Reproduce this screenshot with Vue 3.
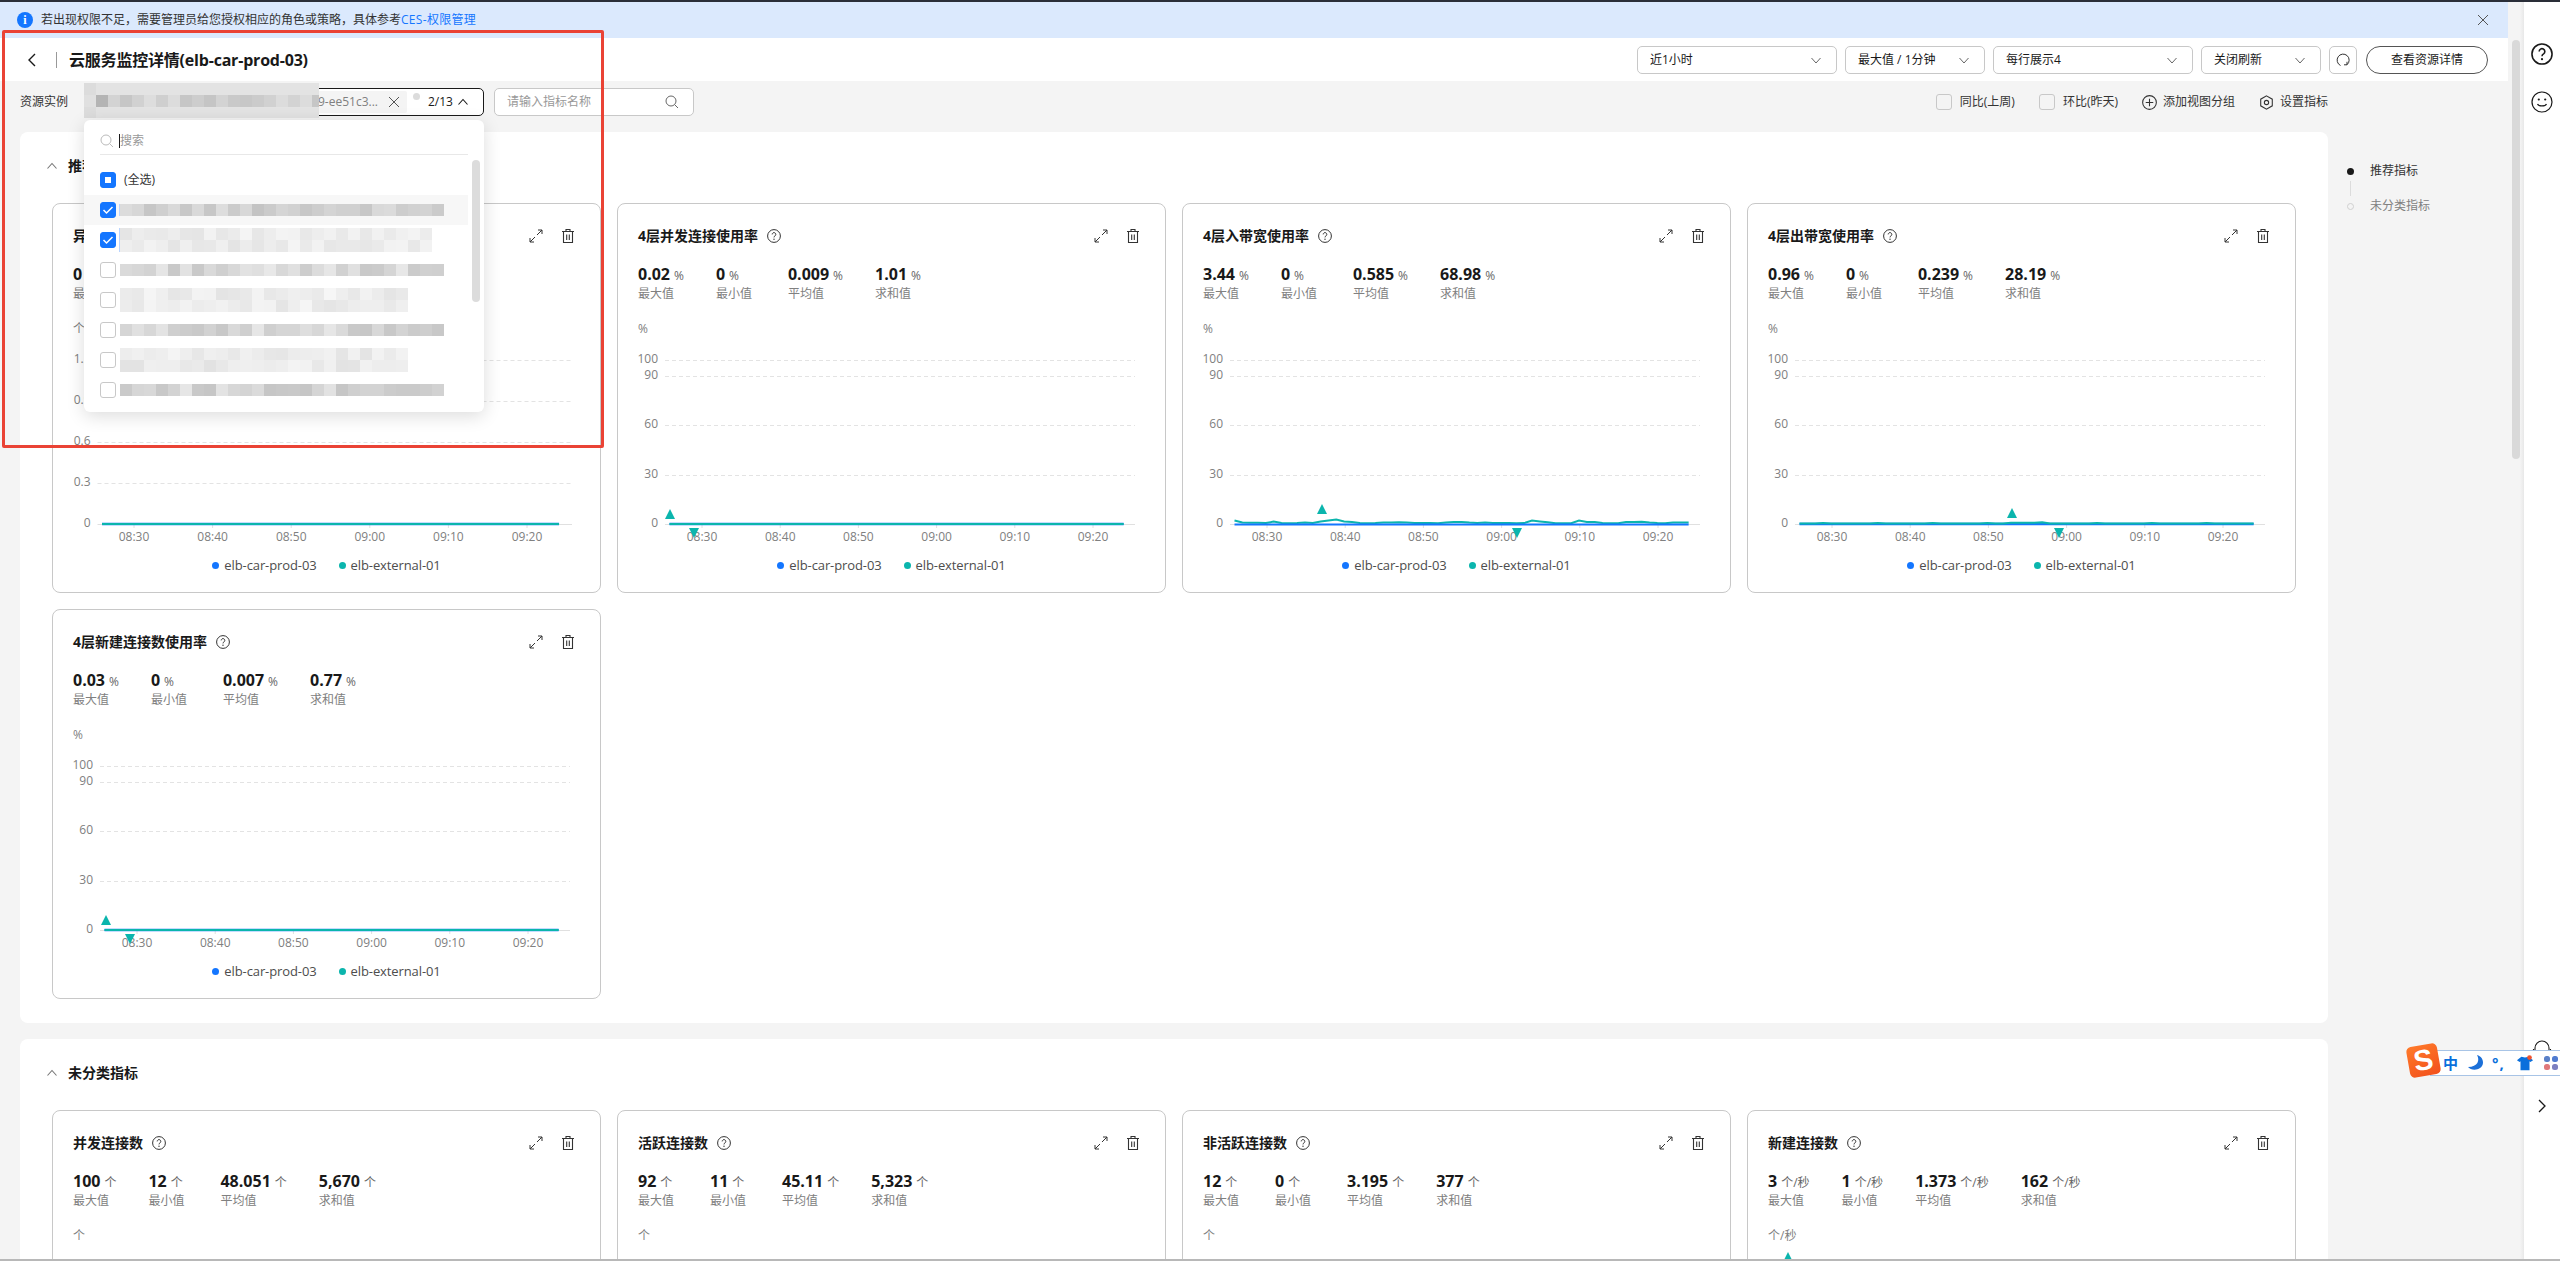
<script setup>
const pctTicks = [
  { label: '100', y: 39 }, { label: '90', y: 55 }, { label: '60', y: 104 }, { label: '30', y: 154 }, { label: '0', y: 203 }
]
const cntTicks = [
  { label: '1.2', y: 39 }, { label: '0.9', y: 80 }, { label: '0.6', y: 121 }, { label: '0.3', y: 162 }, { label: '0', y: 203 }
]
const times = ['08:30', '08:40', '08:50', '09:00', '09:10', '09:20']
const zero = new Array(59).fill(0)
const wobble3 = [3.5,1.5,1.2,1.2,1,2.4,1,.7,.9,1.6,.9,2.4,3.5,4.5,2.6,2,1,.8,1,1.6,1.4,1.7,1.4,1,.9,.9,.8,1.6,1.9,2,1.4,1,1.4,1,.9,.9,.8,.9,3.5,2.6,1.8,.8,.7,.8,3.5,2,2,1,.8,.7,2,1.9,2.2,1.4,1,.8,1.4,1.6,1.4]
const wobble4 = zero.map((_, i) => (i % 7 === 3 ? 1 : 0.5) + (i > 26 && i < 32 ? 0.7 : 0))

const stat = (a, b, c, d, unit) => ['最大值', '最小值', '平均值', '求和值'].map((label, i) => ({ label, unit, value: [a, b, c, d][i] }))

const firstCards = [
  { title: '异常主机数', unit: '个', stats: stat('0', '0', '0', '0', '个'), ticks: cntTicks, x0: 49, tick0: 81, tickStep: 78.6, gridL: 44.5, gridR: 519, teal: zero, blue: zero },
  { title: '4层并发连接使用率', unit: '%', stats: stat('0.02', '0', '0.009', '1.01', '%'), ticks: pctTicks, up: [52, 193], down: 76, teal: zero, blue: zero },
  { title: '4层入带宽使用率', unit: '%', stats: stat('3.44', '0', '0.585', '68.98', '%'), ticks: pctTicks, up: [139, 188], down: 334, teal: wobble3, blue: zero, blueTop: true },
  { title: '4层出带宽使用率', unit: '%', stats: stat('0.96', '0', '0.239', '28.19', '%'), ticks: pctTicks, up: [264, 192], down: 311, teal: wobble4, blue: zero },
  { title: '4层新建连接数使用率', unit: '%', stats: stat('0.03', '0', '0.007', '0.77', '%'), ticks: pctTicks, up: [53, 193], down: 77, teal: zero, blue: zero }
]
// The second group runs past the bottom of the window, so only the top of each chart is drawn.
const secondCards = [
  { title: '并发连接数', unit: '个', stats: stat('100', '12', '48.051', '5,670', '个'), cut: true },
  { title: '活跃连接数', unit: '个', stats: stat('92', '11', '45.11', '5,323', '个'), cut: true },
  { title: '非活跃连接数', unit: '个', stats: stat('12', '0', '3.195', '377', '个'), cut: true },
  { title: '新建连接数', unit: '个/秒', stats: stat('3', '1', '1.373', '162', '个/秒'), up: [40, 29], cut: true }
]
const sections = [
  { name: '推荐指标', cards: firstCards },
  { name: '未分类指标', cards: secondCards }
]

const pts = (c, s) => s.map((v, i) => `${(c.x0 ?? 51.5) + ((c.x0 ? 7.88 : 7.83) * i)},${203 - v}`).join(' ')
const tickX = (c, i) => (c.tick0 ?? 84) + (c.tickStep ?? 78.2) * i

const hash = (a, b) => {
  const x = Math.sin(a * 12.9898 + b * 78.233) * 43758.5453
  return x - Math.floor(x)
}
const gray = (seed, i, lo, hi) => {
  const v = Math.round(lo + (hi - lo) * hash(seed, i))
  return `rgb(${v},${v},${v})`
}
const mosaic = (seed, cols, rows, lo, hi) => Array.from({ length: cols * rows }, (_, i) => gray(seed, i, lo, hi))

const topMask = [
  ...Array.from({ length: 20 }, (_, i) => (i === 0 ? '#dcdcdc' : '#e3e3e3')),
  ...Array.from({ length: 20 }, (_, i) => (i === 0 ? '#e0e0e0' : i === 1 ? '#b4b4b4' : gray(9, i, 196, 222))),
  ...Array.from({ length: 20 }, (_, i) => (i === 0 ? '#dcdcdc' : '#e3e3e3'))
]

const options = [
  { checked: true, hover: true, rows: 1, cols: 27, lo: 196, hi: 222, seed: 1 },
  { checked: true, rows: 2, cols: 26, lo: 228, hi: 244, seed: 2 },
  { rows: 1, cols: 27, lo: 200, hi: 232, seed: 3 },
  { rows: 2, cols: 24, lo: 228, hi: 246, seed: 4 },
  { rows: 1, cols: 27, lo: 198, hi: 230, seed: 5 },
  { rows: 2, cols: 24, lo: 226, hi: 244, seed: 6 },
  { rows: 1, cols: 27, lo: 196, hi: 232, seed: 7 }
]
const selects = [
  { text: '近1小时', w: 200 }, { text: '最大值 / 1分钟', w: 140 }, { text: '每行展示4', w: 200 }, { text: '关闭刷新', w: 120 }
]
</script>

<template>
  <div class="page">
    <svg class="sprite" aria-hidden="true">
      <symbol id="i-expand" viewBox="0 0 14 14">
        <path d="M8 6l5-5M9 1h4v4M6 8l-5 5M1 9v4h4" fill="none" stroke="currentColor" stroke-width="1" />
      </symbol>
      <symbol id="i-trash" viewBox="0 0 14 16">
        <path d="M1 3.5h12M5 3.500V1.500h4v2M2.500 3.500v11h9v-11M5.700 6.500v5.500M8.300 6.500v5.500" fill="none" stroke="currentColor" stroke-width="1.100" />
      </symbol>
      <symbol id="i-help" viewBox="0 0 14 14">
        <circle cx="7" cy="7" r="6.400" fill="none" stroke="currentColor" stroke-width="1" />
        <path d="M5.200 5.400a1.800 1.800 0 1 1 2.800 1.500c-.7.4-1 .8-1 1.500" fill="none" stroke="currentColor" stroke-width="1" />
        <circle cx="7" cy="10.300" r=".7" fill="currentColor" />
      </symbol>
      <symbol id="i-down" viewBox="0 0 12 12">
        <path d="M1.500 4l4.500 5 4.500-5" fill="none" stroke="currentColor" stroke-width="1" />
      </symbol>
      <symbol id="i-up" viewBox="0 0 12 12">
        <path d="M1.500 8.500l4.500-5 4.500 5" fill="none" stroke="currentColor" stroke-width="1.100" />
      </symbol>
      <symbol id="i-search" viewBox="0 0 14 14">
        <circle cx="6" cy="6" r="5" fill="none" stroke="currentColor" stroke-width="1" />
        <path d="M9.700 9.700l3.300 3.300" fill="none" stroke="currentColor" stroke-width="1" />
      </symbol>
      <symbol id="i-close" viewBox="0 0 12 12">
        <path d="M1 1l10 10M11 1L1 11" fill="none" stroke="currentColor" stroke-width="1" />
      </symbol>
    </svg>

    <div class="top-strip"></div>
    <div class="frame">
      <div class="content">
        <div class="banner">
          <span class="info-dot">i</span>
          <span class="banner-text">若出现权限不足，需要管理员给您授权相应的角色或策略，具体参考<a class="banner-link">CES-权限管理</a></span>
          <svg class="banner-close"><use href="#i-close" /></svg>
        </div>

        <div class="header">
          <svg class="back" viewBox="0 0 10 16"><path d="M8 2L2 8l6 6" fill="none" stroke="currentColor" stroke-width="1.400" /></svg>
          <span class="divider"></span>
          <h1 class="page-title">云服务监控详情(elb-car-prod-03)</h1>
          <div class="controls">
            <div v-for="s in selects" :key="s.text" class="select" :style="{ width: s.w + 'px' }">
              <span>{{ s.text }}</span>
              <svg class="chev"><use href="#i-down" /></svg>
            </div>
            <div class="refresh">
              <svg viewBox="0 0 16 16" class="refresh-icon"><path d="M5.500 13.500A6 6 0 1 1 12 12.700M12 9.800v3h-3" fill="none" stroke="currentColor" stroke-width="1" /></svg>
            </div>
            <div class="detail-btn">查看资源详情</div>
          </div>
        </div>

        <div class="toolbar">
          <span class="tool-label">资源实例</span>
          <div class="multi">
            <div class="tag"><span class="tag-text">b9-ee51c3...</span><svg class="tag-x"><use href="#i-close" /></svg></div>
            <span class="multi-dot"></span>
            <span class="count">2/13</span>
            <svg class="multi-chev"><use href="#i-up" /></svg>
          </div>
          <div class="metric-search">
            <span>请输入指标名称</span>
            <svg class="search-ico"><use href="#i-search" /></svg>
          </div>
          <div class="tool-right">
            <label class="tool-item"><span class="box"></span>同比(上周)</label>
            <label class="tool-item"><span class="box"></span>环比(昨天)</label>
            <span class="tool-item">
              <svg viewBox="0 0 14 14" class="tool-ico"><circle cx="7" cy="7" r="6.400" fill="none" stroke="currentColor" /><path d="M7 3.500v7M3.500 7h7" stroke="currentColor" /></svg>添加视图分组
            </span>
            <span class="tool-item">
              <svg viewBox="0 0 14 14" class="tool-ico"><path d="M7 .8l5.400 3.100v6.200L7 13.200l-5.400-3.100V3.900z" fill="none" stroke="currentColor" /><circle cx="7" cy="7" r="2" fill="none" stroke="currentColor" /></svg>设置指标
            </span>
          </div>
        </div>

        <div class="body">
          <div class="sections">
            <section v-for="sec in sections" :key="sec.name" class="section">
              <div class="sec-head">
                <svg class="sec-chev"><use href="#i-up" /></svg>
                <h2>{{ sec.name }}</h2>
              </div>
              <div class="grid">
                <article v-for="c in sec.cards" :key="c.title" class="card">
                  <div class="card-head">
                    <span class="card-title">{{ c.title }}</span>
                    <svg class="help"><use href="#i-help" /></svg>
                    <svg class="act first"><use href="#i-expand" /></svg>
                    <svg class="act trash"><use href="#i-trash" /></svg>
                  </div>
                  <div class="stats">
                    <div v-for="s in c.stats" :key="s.label" class="stat">
                      <div class="stat-val"><b>{{ s.value }}</b><span>{{ s.unit }}</span></div>
                      <div class="stat-label">{{ s.label }}</div>
                    </div>
                  </div>
                  <svg class="chart" viewBox="0 0 547 231" width="547" height="231">
                    <text x="20" y="12" class="ax">{{ c.unit }}</text>
                    <template v-if="!c.cut">
                      <template v-for="t in c.ticks" :key="t.label">
                        <text :x="(c.gridL ?? 47) - 7" :y="t.y + 3" text-anchor="end" class="ax">{{ t.label }}</text>
                        <line v-if="t.label !== '0'" :x1="c.gridL ?? 47" :x2="c.gridR ?? 517" :y1="t.y + .5" :y2="t.y + .5" class="dash" />
                      </template>
                      <line :x1="c.gridL ?? 47" :x2="c.gridR ?? 517" y1="203.500" y2="203.500" class="axis" />
                      <template v-for="(t, i) in times" :key="t">
                        <line :x1="tickX(c, i)" :x2="tickX(c, i)" y1="203" y2="207" class="axis" />
                        <text :x="tickX(c, i)" y="220" text-anchor="middle" class="ax">{{ t }}</text>
                      </template>
                      <polyline v-if="!c.blueTop" :points="pts(c, c.blue)" class="ln blue" />
                      <polyline :points="pts(c, c.teal)" class="ln teal" />
                      <polyline v-if="c.blueTop" :points="pts(c, c.blue)" class="ln blue low" />
                    </template>
                    <polygon v-if="c.up" :points="`${c.up[0] - 5},${c.up[1] + 5} ${c.up[0] + 5},${c.up[1] + 5} ${c.up[0]},${c.up[1] - 5}`" class="mark" />
                    <polygon v-if="c.down" :points="`${c.down - 5},207 ${c.down + 5},207 ${c.down},217`" class="mark" />
                  </svg>
                  <div v-if="!c.cut" class="legend">
                    <span class="lg"><i class="dot dot-blue"></i>elb-car-prod-03</span>
                    <span class="lg"><i class="dot dot-teal"></i>elb-external-01</span>
                  </div>
                </article>
              </div>
            </section>
          </div>
          <nav class="anchors">
            <div class="anchor on"><i class="a-dot"></i>推荐指标</div>
            <div class="a-line"></div>
            <div class="anchor"><i class="a-ring"></i>未分类指标</div>
          </nav>
        </div>
      </div>

      <div class="track"><div class="thumb"></div></div>

      <aside class="rail">
        <svg class="rail-ico help-ico"><use href="#i-help" /></svg>
        <svg class="rail-ico smile" viewBox="0 0 22 22">
          <circle cx="11" cy="11" r="10" fill="none" stroke="currentColor" stroke-width="1.200" />
          <circle cx="7.800" cy="8.500" r="1.100" fill="currentColor" /><circle cx="14.200" cy="8.500" r="1.100" fill="currentColor" />
          <path d="M6.500 13c1.200 2.600 7.800 2.600 9 0" fill="none" stroke="currentColor" stroke-width="1.200" />
        </svg>
        <svg class="rail-ico headset" viewBox="0 0 22 22">
          <path d="M4 13V9a7 7 0 0 1 14 0v4M2.500 10v5M19.500 10v5" fill="none" stroke="currentColor" stroke-width="1.100" />
        </svg>
        <svg class="rail-ico next" viewBox="0 0 10 16"><path d="M2 2l6 6-6 6" fill="none" stroke="currentColor" stroke-width="1.300" /></svg>
      </aside>
    </div>

    <!-- overlays -->
    <div class="mask">
      <i v-for="(g, i) in topMask" :key="i" :style="{ background: g }"></i>
    </div>

    <div class="dropdown">
      <div class="dd-search">
        <svg class="dd-ico"><use href="#i-search" /></svg>
        <span class="caret"></span>
        <span class="dd-ph">搜索</span>
      </div>
      <div class="dd-row all">
        <span class="cb on"><span class="semi"></span></span>
        <span class="all-label">(全选)</span>
      </div>
      <div v-for="o in options" :key="o.seed" class="dd-row" :class="{ hover: o.hover }">
        <span class="cb" :class="{ on: o.checked }">
          <svg v-if="o.checked" viewBox="0 0 16 16" class="cb-check"><path d="M3.500 8l3 3 6-6" fill="none" stroke="#fff" stroke-width="1.500" /></svg>
        </span>
        <div class="blur" :class="{ edge: o.checked }" :style="{ gridTemplateColumns: `repeat(${o.cols}, 12px)` }">
          <i v-for="(g, i) in mosaic(o.seed, o.cols, o.rows, o.lo, o.hi)" :key="i" :style="{ background: g }"></i>
        </div>
      </div>
      <div class="dd-scroll"></div>
    </div>

    <div class="ime">
      <span class="ime-logo"><span>S</span></span>
      <span class="ime-zh">中</span>
      <svg class="ime-ico" viewBox="0 0 18 18"><path d="M11 1c3 5 1 12-9 12 3 4 14 4 15-4 .3-3.500-2-7-6-8z" fill="#1c70d8" /></svg>
      <span class="ime-punc">°,</span>
      <svg class="ime-ico" viewBox="0 0 20 18"><path d="M6 2l4 1 4-1 5 4-3 2-1-1v10H5V7L4 8 1 6z" fill="#0a6fdc" /><circle cx="15" cy="3" r="2.600" fill="#f0522d" /></svg>
      <svg class="ime-ico" viewBox="0 0 18 18">
        <rect x="2" y="2" width="6" height="6" rx="2.500" fill="#5a80c8" /><rect x="10" y="2" width="6" height="6" rx="2.500" fill="#4f7bd0" />
        <rect x="2" y="10" width="6" height="6" rx="2.500" fill="#e0787a" /><rect x="10" y="10" width="6" height="6" rx="2.500" fill="#7c80c0" />
      </svg>
    </div>

    <div class="annot"></div>
    <div class="bottom-line"></div>
  </div>
</template>

<style>
html, body { margin: 0; padding: 0; background: #fff; overflow: hidden; }
</style>

<style scoped>
* { box-sizing: border-box; }
.page {
  position: relative; width: 2560px; height: 1261px; overflow: hidden; background: #f4f4f4; color: #191919;
  font-family: "Open Sans", "Noto Sans CJK SC", sans-serif; font-size: 12px; line-height: 20px;
}
.sprite { position: absolute; width: 0; height: 0; }
.top-strip { height: 2px; background: #2a2e38; }
.frame { display: flex; height: 1259px; }
.content { width: 2508px; flex: none; background: #f4f4f4; overflow: hidden; }

.banner { height: 36px; background: #dbe9fd; display: flex; align-items: center; padding-left: 17px; }
.info-dot {
  width: 16px; height: 16px; border-radius: 50%; background: #1476ff; color: #fff; font-weight: 700; font-size: 12px;
  line-height: 16px; text-align: center; margin-right: 8px; font-family: "Liberation Serif", serif;
}
.banner-text { color: #333; }
.banner-link { color: #1476ff; letter-spacing: .3px; }
.banner-close { width: 12px; height: 12px; margin-left: auto; margin-right: 19px; color: #555; }

.header { height: 43px; background: #fff; display: flex; align-items: center; padding-left: 27px; }
.back { width: 10px; height: 16px; color: #191919; }
.divider { width: 1px; height: 16px; background: #999; margin: 0 12px 0 19px; }
.page-title { margin: 0; font-size: 16px; font-weight: 700; line-height: 24px; letter-spacing: -.2px; }
.controls { margin-left: auto; padding-right: 20px; display: flex; gap: 8px; align-items: center; }
.select {
  height: 28px; border: 1px solid #c8c8c8; border-radius: 5px; padding: 0 14px 0 12px; display: flex; align-items: center;
  justify-content: space-between; background: #fff;
}
.chev { width: 12px; height: 12px; color: #666; }
.refresh { width: 28px; height: 28px; border: 1px solid #c8c8c8; border-radius: 5px; display: flex; align-items: center; justify-content: center; }
.refresh-icon { width: 16px; height: 16px; color: #333; }
.detail-btn { width: 122px; height: 28px; border: 1px solid #555; border-radius: 14px; text-align: center; line-height: 26px; margin-left: 1px; }

.toolbar { height: 51px; display: flex; align-items: flex-start; padding: 7px 180px 0 20px; }
.tool-label { width: 64px; line-height: 28px; color: #333; }
.multi {
  width: 400px; height: 28px; border: 1px solid #191919; border-radius: 5px; background: #fff; display: flex; align-items: center;
  position: relative; padding: 0 14px 0 2px;
}
.tag { width: 320px; height: 22px; background: #f4f4f4; border-radius: 2px; display: flex; align-items: center; justify-content: flex-end; padding-right: 7px; }
.tag-text { color: #808080; margin-right: 10px; }
.tag-x { width: 12px; height: 12px; color: #555; }
.multi-dot { width: 7px; height: 7px; border-radius: 50%; background: #dcdcdc; margin: -12px 0 0 6px; }
.count { margin-left: 8px; }
.multi-chev { width: 12px; height: 12px; margin-left: auto; color: #191919; }
.metric-search {
  width: 200px; height: 28px; margin-left: 10px; border: 1px solid #c8c8c8; border-radius: 5px; background: #fff; padding: 0 14px 0 12px;
  display: flex; align-items: center; justify-content: space-between; color: #999;
}
.search-ico { width: 14px; height: 14px; color: #666; }
.tool-right { margin-left: auto; display: flex; align-items: center; height: 28px; color: #333; }
.tool-item { display: flex; align-items: center; margin-left: 24px; }
.tool-item .box { width: 16px; height: 16px; border: 1px solid #c8c8c8; border-radius: 3px; margin-right: 8px; }
.tool-ico { width: 15px; height: 15px; margin-right: 6px; color: #333; }

.body { display: flex; padding-left: 20px; }
.sections { width: 2308px; flex: none; display: flex; flex-direction: column; gap: 16px; }
.section { background: #fff; border-radius: 8px; padding: 24px 32px; }
.sec-head { display: flex; align-items: center; height: 20px; margin-bottom: 27px; }
.sec-chev { width: 12px; height: 12px; color: #777; margin: 0 10px 0 -6px; }
.sec-head h2 { margin: 0; font-size: 14px; font-weight: 700; line-height: 20px; }
.grid { display: grid; grid-template-columns: repeat(4, 1fr); gap: 16px; }
.card { height: 390px; border: 1px solid #c8c8c8; border-radius: 8px; background: #fff; }
.card-head { display: flex; align-items: center; height: 22px; margin: 21px 20px 0; }
.card-title { font-size: 14px; font-weight: 700; }
.help { width: 14px; height: 14px; margin-left: 9px; color: #333; }
.act { width: 14px; height: 14px; color: #333; flex: none; }
.act.first { margin-left: auto; margin-right: 18px; }
.act.trash { width: 14px; height: 16px; margin-right: 5px; }
.stats { display: flex; gap: 32px; margin: 17px 20px 0; }
.stat { min-width: 40px; }
.stat-val { height: 20px; line-height: 20px; white-space: nowrap; }
.stat-val b { font-size: 16px; font-weight: 700; }
.stat-val span { margin-left: 4px; font-size: 12px; color: #666; }
.stat-label { color: #808080; line-height: 20px; white-space: nowrap; }
.chart { display: block; margin-top: 17px; overflow: visible; }
.ax { font-size: 12px; fill: #808080; }
.dash { stroke: #e3e3e3; stroke-dasharray: 4 3; }
.axis { stroke: #e0e0e0; }
.ln { fill: none; stroke-width: 2.500; }
.ln.blue { stroke: #1476ff; }
.ln.blue.low { stroke-width: 2; transform: translateY(.6px); }
.ln.teal { stroke: #0bb5ad; stroke-width: 2; }
.mark { fill: #0bb5ad; }
.legend { height: 26px; display: flex; justify-content: center; align-items: center; gap: 22px; color: #4d4d4d; font-size: 13px; letter-spacing: -.1px; }
.lg { display: flex; align-items: center; }
.dot { width: 7px; height: 7px; border-radius: 50%; margin-right: 5px; }
.dot-blue { background: #1476ff; }
.dot-teal { background: #0bb5ad; }

.anchors { margin: 29px 0 0 20px; color: #808080; }
.anchor { display: flex; align-items: center; height: 20px; white-space: nowrap; }
.anchor.on { color: #333; }
.a-dot { width: 7px; height: 7px; border-radius: 50%; background: #191919; margin: 0 16px 0 -1px; }
.a-ring { width: 7px; height: 7px; border-radius: 50%; border: 1px solid #d0d0d0; margin: 0 16px 0 -1px; }
.a-line { width: 1px; height: 15px; background: #dcdcdc; margin-left: 2px; }

.track { width: 16px; flex: none; background: linear-gradient(90deg, #f4f4f4 75%, #e8e8e8); padding-top: 38px; }
.thumb { width: 8px; height: 419px; margin-left: 4px; border-radius: 4px; background: #d9d9d9; }
.rail { flex: 1; background: #fff; display: flex; flex-direction: column; align-items: center; color: #191919; }
.rail-ico { display: block; }
.help-ico { width: 22px; height: 22px; margin-top: 41px; }
.smile { width: 22px; height: 22px; margin-top: 26px; }
.headset { width: 22px; height: 22px; margin-top: 926px; }
.next { width: 10px; height: 16px; margin-top: 37px; }

.mask {
  position: absolute; left: 84px; top: 83px; width: 235px; height: 35px; overflow: hidden;
  display: grid; grid-template-columns: repeat(20, 12px); grid-auto-rows: 12px;
}
.mask i, .blur i { display: block; }

.dropdown {
  position: absolute; left: 84px; top: 120px; width: 400px; height: 292px; background: #fff; border-radius: 6px; overflow: hidden;
  box-shadow: 0 4px 18px rgba(0, 0, 0, .14);
}
.dd-search { height: 35px; margin: 0 16px 10px; padding-top: 8px; border-bottom: 1px solid #e8e8e8; display: flex; align-items: center; }
.dd-ico { width: 14px; height: 14px; color: #bbb; margin-right: 5px; }
.caret { width: 1px; height: 14px; background: #191919; }
.dd-ph { color: #999; }
.dd-row { height: 30px; display: flex; align-items: center; padding-left: 16px; width: 384px; }
.dd-row.hover { background: #f7f7f7; }
.cb { width: 16px; height: 16px; flex: none; border: 1px solid #c8c8c8; border-radius: 3px; display: flex; align-items: center; justify-content: center; background: #fff; }
.cb.on { background: #1476ff; border-color: #1476ff; }
.semi { width: 6px; height: 6px; background: #fff; }
.cb-check { width: 16px; height: 16px; flex: none; }
.all-label { margin-left: 8px; color: #333; }
.blur { display: grid; grid-auto-rows: 12px; margin-left: 4px; }
.blur.edge { box-shadow: -1px 0 0 #b9d4ff; }
.dd-scroll { position: absolute; left: 388px; top: 40px; width: 8px; height: 142px; border-radius: 4px; background: #dcdcdc; }

.ime {
  position: absolute; left: 2430px; top: 1050px; width: 130px; height: 26px; background: #fff; border: 1px solid #a8c4e6; border-right: 0;
  display: flex; align-items: center; padding-left: 12px; gap: 8px;
}
.ime-logo {
  position: absolute; left: -23px; top: -6px; width: 31px; height: 31px; border-radius: 5px; background: linear-gradient(160deg, #ff7a2a, #f2501c);
  transform: rotate(-10deg); display: flex; align-items: center; justify-content: center; color: #fff; font: 700 29px/31px "Liberation Sans", sans-serif;
}
.ime-zh { color: #0a6fdc; font-weight: 700; font-size: 15px; width: 15px; }
.ime-ico { width: 18px; height: 18px; flex: none; }
.ime-punc { color: #0a6fdc; font-weight: 700; font-size: 15px; letter-spacing: 1px; width: 16px; }

.annot { position: absolute; left: 2px; top: 30px; width: 602px; height: 418px; border: 3px solid #ea4335; border-radius: 2px; pointer-events: none; }
.bottom-line { position: absolute; left: 0; right: 0; bottom: 0; height: 2px; background: #b8b8b8; }
</style>
